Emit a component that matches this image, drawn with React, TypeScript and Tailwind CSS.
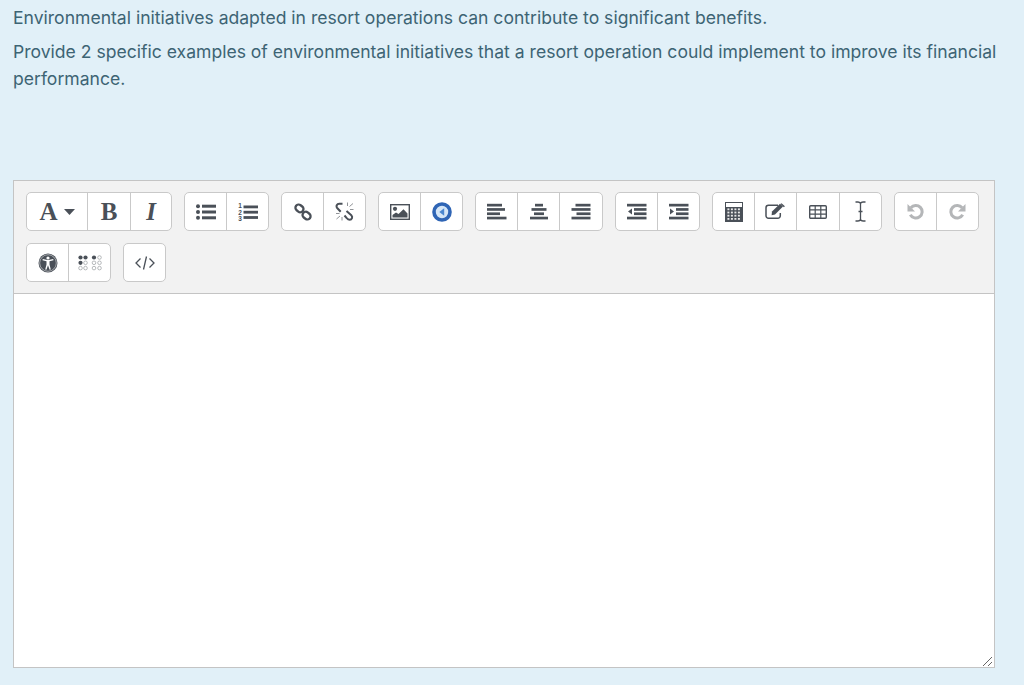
import type { ReactNode } from 'react';

const INK = '#4a5058';

// Toolbar icons, drawn to the size of the Atto sprites
const BulletList = () => (
  <svg width="20" height="16" viewBox="0 0 20 16" fill={INK}>
    <circle cx="2" cy="2.2" r="2" />
    <circle cx="2" cy="8" r="2" />
    <circle cx="2" cy="13.800" r="2" />
    <rect x="6" y="0.700" width="14" height="3" />
    <rect x="6" y="6.500" width="14" height="3" />
    <rect x="6" y="12.300" width="14" height="3" />
  </svg>
);

const NumberList = () => (
  <svg width="20" height="20" viewBox="0 0 20 20" fill={INK}>
    <rect x="5.500" y="3.500" width="14.500" height="2.800" />
    <rect x="5.500" y="8.800" width="14.500" height="2.800" />
    <rect x="5.500" y="14.100" width="14.500" height="2.800" />
    <text x="0.300" y="6" fontSize="6.500" fontWeight="700" fontFamily="Liberation Sans, sans-serif">1</text>
    <text x="0.300" y="12.500" fontSize="6.500" fontWeight="700" fontFamily="Liberation Sans, sans-serif">2</text>
    <text x="0.300" y="19" fontSize="6.500" fontWeight="700" fontFamily="Liberation Sans, sans-serif">3</text>
  </svg>
);

const LinkIcon = () => (
  <svg width="18" height="18" viewBox="0 0 18 18" fill="none" stroke={INK} strokeWidth="2.300">
    <rect x="1.200" y="2.200" width="8.500" height="6.400" rx="3.200" transform="rotate(38 5.450 5.400)" />
    <rect x="8.300" y="9.400" width="8.500" height="6.400" rx="3.200" transform="rotate(38 12.550 12.600)" />
  </svg>
);

const UnlinkIcon = () => (
  <svg width="19" height="19" viewBox="0 0 19 19" fill="none" stroke={INK}>
    <path d="M7.500 1.800H4.200C1.800 1.800.8 4.300 2.200 6l3.500 3.800" strokeWidth="2" />
    <path d="M11.500 9l4.800 4.300c1.800 1.800.6 4.500-1.600 4.500-1.400 0-2.200-.8-3.200-1.900L9.500 13.500" strokeWidth="2" />
    <path d="M12.500 .5v3.500M18 1.500l-3.500 3M18.500 7.500h-3.500M1 11.500h3.500M1.500 17l3.500-3M7 18.500V15" strokeWidth="0.900" stroke="#85888c" />
  </svg>
);

const ImageIcon = () => (
  <svg width="20" height="16" viewBox="0 0 20 16">
    <rect x="0.700" y="0.700" width="18.600" height="14.600" fill="#fff" stroke={INK} strokeWidth="1.400" />
    <circle cx="5" cy="4.800" r="2.100" fill={INK} />
    <path d="M2.500 13.500v-2.500l3.500-2.500 2.500 1.500L13.500 5.200 17.500 9.500v4z" fill={INK} />
  </svg>
);

const MediaIcon = () => (
  <svg width="20" height="20" viewBox="0 0 20 20">
    <circle cx="10" cy="10" r="8" fill="#d5e6f7" stroke="#2f65b5" strokeWidth="3.600" />
    <path d="M12.200 6.200v7.600L7.300 10z" fill="#4a86cf" />
  </svg>
);

const Align = ({ bars }: { bars: [number, number][] }) => (
  <svg width="20" height="17" viewBox="0 0 20 17" fill={INK}>
    {bars.map(([x, w], i) => (
      <rect key={i} x={x} y={0.800 + i * 4.300} width={w} height="2.700" />
    ))}
  </svg>
);

const Indent = ({ dir }: { dir: 'in' | 'out' }) => (
  <svg width="20" height="17" viewBox="0 0 20 17" fill={INK}>
    <rect x="0" y="0.800" width="19.500" height="2.700" />
    <rect x="7" y="5.100" width="12.500" height="2.700" />
    <rect x="7" y="9.400" width="12.500" height="2.700" />
    <rect x="0" y="13.700" width="19.500" height="2.700" />
    {dir === 'out' ? <path d="M5 5.600v6L1 8.600z" /> : <path d="M1 5.600v6l4-3z" />}
  </svg>
);

const Calculator = () => (
  <svg width="18" height="20" viewBox="0 0 18 20">
    <rect x="0.500" y="0.500" width="17" height="19" fill="#fff" stroke={INK} />
    <rect x="1" y="5" width="16" height="14.500" fill={INK} />
    {[0, 1, 2, 3].map((r) =>
      [0, 1, 2, 3].map((c) => (
        <rect key={`${r}-${c}`} x={2.400 + c * 3.500} y={6.400 + r * 3.200} width="2" height="1.800" fill="#e8e8e8" />
      )),
    )}
  </svg>
);

const EditIcon = () => (
  <svg width="21" height="17" viewBox="0 0 21 17" fill="none">
    <path d="M13 2.200H3.500a2.500 2.500 0 0 0-2.500 2.500v8.100a2.500 2.500 0 0 0 2.500 2.500h9.300a2.500 2.500 0 0 0 2.500-2.500V10" stroke={INK} strokeWidth="1.500" />
    <path d="M7 8.500L15 .8l3 2.800-8 8-3.400.7z" fill={INK} />
    <path d="M16.500 0.200l3.400 3-1 1-3.400-3.200z" fill={INK} />
  </svg>
);

const TableIcon = () => (
  <svg width="18" height="14" viewBox="0 0 18 14" fill="none" stroke={INK}>
    <rect x="0.700" y="0.700" width="16.600" height="12.600" rx="1" strokeWidth="1.400" />
    <path d="M0.700 4.800h16.600M0.700 9.200h16.600M6.200 1v12M11.800 1v12" strokeWidth="1.200" />
  </svg>
);

const CursorIcon = () => (
  <svg width="11" height="21" viewBox="0 0 11 21" fill="none" stroke={INK} strokeWidth="1.300">
    <path d="M.5 1h2.200c1.700 0 2.800 1 2.800 2v15c0 1-1.100 2-2.800 2H.5M10.500 1H8.300C6.600 1 5.500 2 5.500 3v15c0 1 1.100 2 2.800 2h2.200M3.500 10.500h4" />
  </svg>
);

const Undo = ({ flip }: { flip?: boolean }) => (
  <svg width="17" height="17" viewBox="0 0 17 17" fill="none" className={flip ? '-scale-x-100' : ''}>
    <path d="M3.300 11.800a6.300 6.300 0 1 0 .6-7" stroke="#b4b6b8" strokeWidth="3" />
    <path d="M.5 1v7.500H8z" fill="#b4b6b8" />
  </svg>
);

const AccessIcon = () => (
  <svg width="20" height="20" viewBox="0 0 20 20">
    <circle cx="10" cy="10" r="9.500" fill={INK} />
    <circle cx="10" cy="10" r="8.300" fill="none" stroke="#fff" strokeWidth="0.500" />
    <circle cx="10" cy="5" r="1.600" fill="#fff" />
    <path d="M4.500 7.200l4 1.100v3.200l-1.300 5 1.200.3 1.600-4.600 1.600 4.600 1.200-.3-1.300-5V8.300l4-1.100-.3-1.100-4.400 1H9.200l-4.400-1z" fill="#fff" />
  </svg>
);

const Braille = () => {
  const solid = new Set(['0-0', '0-1', '0-2', '1-0']);
  const cols = [2.500, 7.500, 16, 21.500];
  return (
    <svg width="24" height="16" viewBox="0 0 24 16">
      {[2.500, 7.800, 13.100].map((y, r) =>
        cols.map((x, c) => {
          const on = solid.has(`${r}-${c}`);
          return (
            <circle
              key={`${r}-${c}`}
              cx={x}
              cy={y}
              r={on ? 2.100 : 1.800}
              fill={on ? INK : 'none'}
              stroke={on ? 'none' : '#9a9da1'}
              strokeWidth="0.700"
            />
          );
        }),
      )}
    </svg>
  );
};

const CodeIcon = () => (
  <svg width="20" height="14" viewBox="0 0 20 14" fill="none" stroke={INK} strokeWidth="1.300">
    <path d="M5.500 2.500L1 7l4.500 4.500M14.500 2.500L19 7l-4.500 4.500M11.500 .5L8.500 13.500" />
  </svg>
);

function Btn({ w, children }: { w: string; children: ReactNode }) {
  return (
    <div className={`${w} flex h-full items-center justify-center border-r border-[#c9c9c9] last:border-r-0`}>
      {children}
    </div>
  );
}

function Group({ children }: { children: ReactNode }) {
  return (
    <div className="flex h-[39px] items-stretch rounded-[5px] border border-[#c9c9c9] bg-white">{children}</div>
  );
}

export default function App() {
  return (
    <div className="h-[685px] w-[1024px] overflow-hidden bg-[#e1f0f8] font-['Inter','Noto_Sans',sans-serif] text-[#3d6474]">
      <div className="pl-[13px] pr-[24px] pt-[4px] text-[17.570px] leading-[27px]">
        <p>Environmental initiatives adapted in resort operations can contribute to significant benefits.</p>
        <p className="mt-[7px]">
          Provide 2 specific examples of environmental initiatives that a resort operation could implement to improve
          its financial performance.
        </p>
      </div>

      <div className="ml-[13px] mt-[88px] w-[982px] border border-[#c4c4c4] bg-white">
        <div className="flex h-[113px] flex-wrap content-start gap-x-[12px] gap-y-[12px] border-b border-[#c4c4c4] bg-[#f2f2f2] pl-[12px] pt-[11px]">
          <Group>
            <Btn w="w-[61px]">
              <span className="flex items-center gap-[6px] font-['Liberation_Serif',serif] text-[25px] font-bold text-[#4a5058]">
                A
                <svg width="11" height="6" viewBox="0 0 11 6" fill={INK}>
                  <path d="M0 0h11L5.500 6z" />
                </svg>
              </span>
            </Btn>
            <Btn w="w-[43px]">
              <span className="font-['Liberation_Serif',serif] text-[25px] font-bold text-[#4a5058]">B</span>
            </Btn>
            <Btn w="w-[40px]">
              <span className="font-['Liberation_Serif',serif] text-[25px] font-bold italic text-[#4a5058]">I</span>
            </Btn>
          </Group>
          <Group>
            <Btn w="w-[42px]"><BulletList /></Btn>
            <Btn w="w-[41px]"><NumberList /></Btn>
          </Group>
          <Group>
            <Btn w="w-[42px]"><LinkIcon /></Btn>
            <Btn w="w-[41px]"><UnlinkIcon /></Btn>
          </Group>
          <Group>
            <Btn w="w-[42px]"><ImageIcon /></Btn>
            <Btn w="w-[41px]"><MediaIcon /></Btn>
          </Group>
          <Group>
            <Btn w="w-[42px]"><Align bars={[[0, 15], [0, 18], [0, 13], [0, 19.500]]} /></Btn>
            <Btn w="w-[42px]"><Align bars={[[6, 8], [2.500, 15], [5, 10], [1, 18]]} /></Btn>
            <Btn w="w-[42px]"><Align bars={[[4.500, 15], [0.500, 19], [5.500, 14], [0.500, 19]]} /></Btn>
          </Group>
          <Group>
            <Btn w="w-[42px]"><Indent dir="out" /></Btn>
            <Btn w="w-[41px]"><Indent dir="in" /></Btn>
          </Group>
          <Group>
            <Btn w="w-[42px]"><Calculator /></Btn>
            <Btn w="w-[42px]"><EditIcon /></Btn>
            <Btn w="w-[43px]"><TableIcon /></Btn>
            <Btn w="w-[41px]"><CursorIcon /></Btn>
          </Group>
          <Group>
            <Btn w="w-[42px]"><Undo /></Btn>
            <Btn w="w-[41px]"><Undo flip /></Btn>
          </Group>
          <Group>
            <Btn w="w-[42px]"><AccessIcon /></Btn>
            <Btn w="w-[41px]"><Braille /></Btn>
          </Group>
          <Group>
            <Btn w="w-[41px]"><CodeIcon /></Btn>
          </Group>
        </div>
        <div className="relative h-[373px] bg-white">
          <svg className="absolute bottom-0 right-0" width="12" height="12" viewBox="0 0 12 12" stroke="#666" fill="none">
            <path d="M1 11L10 2M6 11l4-4" />
          </svg>
        </div>
      </div>
    </div>
  );
}
